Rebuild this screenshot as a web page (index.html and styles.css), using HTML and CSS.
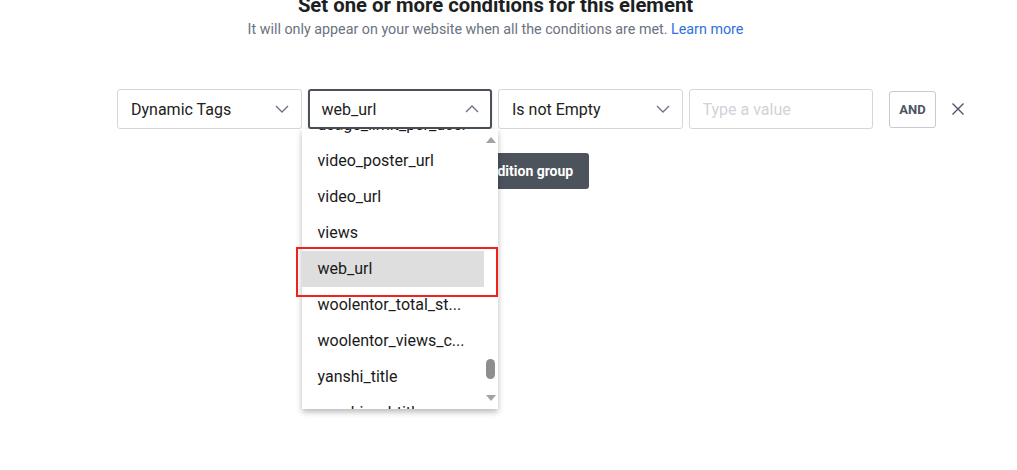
FILE: index.html
```html
<!DOCTYPE html>
<html lang="en">
<head>
    <meta charset="UTF-8">
    <meta name="viewport" content="width=device-width, initial-scale=1.0">
    <title>Display Conditions</title>
    <link rel="stylesheet" href="styles.css">
</head>
<body>
    <div class="header">
        <h1>Set one or more conditions for this element</h1>
        <p>It will only appear on your website when all the conditions are met. <a href="#">Learn more</a></p>
    </div>

    <div class="condition-row">
        <div class="select">
            <span>Dynamic Tags</span>
            <svg class="chevron" width="14" height="8" viewBox="0 0 14 8"><path d="M1 1l6 6 6-6" fill="none" stroke="#6b7280" stroke-width="1.3"/></svg>
        </div>
        <div class="select-wrap">
            <div class="select focused">
                <span>web_url</span>
                <svg class="chevron" width="14" height="8" viewBox="0 0 14 8"><path d="M1 7l6-6 6 6" fill="none" stroke="#6b7280" stroke-width="1.3"/></svg>
            </div>
            <div class="dropdown">
                <div class="options">
                    <div class="option first">usage_limit_per_user</div>
                    <div class="option">video_poster_url</div>
                    <div class="option">video_url</div>
                    <div class="option">views</div>
                    <div class="option selected">web_url</div>
                    <div class="option">woolentor_total_st...</div>
                    <div class="option">woolentor_views_c...</div>
                    <div class="option">yanshi_title</div>
                    <div class="option">yanshi_subtitle</div>
                </div>
                <div class="scrollbar">
                    <span class="arrow up"></span>
                    <span class="thumb"></span>
                    <span class="arrow down"></span>
                </div>
                <div class="highlight-box"></div>
            </div>
        </div>
        <div class="select">
            <span>Is not Empty</span>
            <svg class="chevron" width="14" height="8" viewBox="0 0 14 8"><path d="M1 1l6 6 6-6" fill="none" stroke="#6b7280" stroke-width="1.3"/></svg>
        </div>
        <input class="value-input" type="text" placeholder="Type a value">
        <button class="and-btn">AND</button>
        <svg class="remove" width="14" height="14" viewBox="0 0 14 14"><path d="M1.5 1.5l11 11M12.5 1.5l-11 11" stroke="#4b5563" stroke-width="1.4"/></svg>
    </div>

    <div class="group-actions">
        <button class="group-btn">Add condition group</button>
    </div>
</body>
</html>
```

FILE: styles.css
```css
html, body {
    min-height: 470px;
}
body {
    margin: 0;
    font-family: Roboto, "Liberation Sans", sans-serif;
    color: #1f2328;
    background: #fff;
}
.header {
    text-align: center;
    margin-top: -6px;
    padding-right: 26px;
}
.header h1 {
    margin: 0;
    font-size: 20.3px;
    font-weight: 700;
    line-height: 22px;
    color: #1d1f23;
}
.header p {
    margin: 4px 0 0;
    font-size: 14.3px;
    line-height: 18px;
    color: #6b7280;
}
.header a {
    color: #2f6fe4;
    text-decoration: none;
}
.condition-row {
    display: flex;
    align-items: center;
    gap: 6px;
    margin: 51px 0 0 117px;
}
.select {
    box-sizing: border-box;
    width: 184.5px;
    height: 40px;
    border: 1px solid #d4d6da;
    border-radius: 3px;
    display: flex;
    align-items: center;
    justify-content: space-between;
    padding: 0 12px 0 13px;
    font-size: 16px;
    color: #222;
}
.select.focused {
    border: 2px solid #4a5059;
    padding: 0 11px 0 12px;
    box-shadow: 0 1px 2px rgba(0, 0, 0, 0.15);
}
.select-wrap {
    position: relative;
}
.chevron {
    display: block;
}
.value-input {
    box-sizing: border-box;
    width: 184.5px;
    height: 40px;
    border: 1px solid #d4d6da;
    border-radius: 3px;
    padding: 0 13px;
    font-family: inherit;
    font-size: 16px;
}
.value-input::placeholder {
    color: #d0d3d8;
}
.and-btn {
    box-sizing: border-box;
    margin-left: 10px;
    width: 47px;
    height: 37px;
    border: 1px solid #c8cace;
    border-radius: 3px;
    background: #fff;
    font-family: inherit;
    font-weight: 700;
    font-size: 13px;
    color: #4b5563;
    padding: 0;
}
.remove {
    margin-left: 9px;
}
.dropdown {
    position: absolute;
    top: 40px;
    left: -6px;
    width: 196px;
    height: 280px;
    background: #fff;
    box-shadow: 0 3px 6px rgba(0, 0, 0, 0.28);
    display: flex;
    z-index: 2;
}
.options {
    flex: 1;
    overflow: hidden;
}
.option {
    height: 36px;
    line-height: 36px;
    padding-left: 16px;
    font-size: 16px;
    color: #1a1a1a;
    white-space: nowrap;
}
.option.first {
    margin-top: -22px;
}
.option.selected {
    background: #dedede;
}
.scrollbar {
    width: 14px;
    position: relative;
    background: #fff;
}
.arrow {
    position: absolute;
    left: 2px;
    width: 0;
    height: 0;
    border-left: 5px solid transparent;
    border-right: 5px solid transparent;
}
.arrow.up {
    top: 8px;
    border-bottom: 6px solid #a3a3a3;
}
.arrow.down {
    bottom: 8px;
    border-top: 6px solid #a3a3a3;
}
.thumb {
    position: absolute;
    left: 2px;
    top: 230px;
    width: 9px;
    height: 20px;
    border-radius: 5px;
    background: #8e8e8e;
}
.highlight-box {
    position: absolute;
    left: -6px;
    top: 118px;
    width: 202px;
    height: 50px;
    box-sizing: border-box;
    border: 2px solid #f0231c;
}
.group-actions {
    display: flex;
    justify-content: center;
    margin-top: 24px;
    padding-right: 26px;
}
.group-btn {
    height: 36px;
    padding: 0 16px 0 44px;
    border: none;
    border-radius: 3px;
    background: #4c535c;
    color: #fff;
    font-family: inherit;
    font-weight: 700;
    font-size: 14px;
}
```
